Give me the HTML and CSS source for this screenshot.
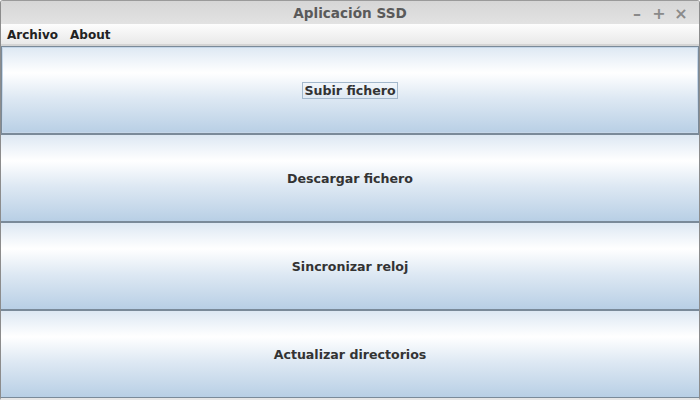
FILE: index.html
```html
<!DOCTYPE html>
<html>
<head>
<meta charset="utf-8">
<link rel="stylesheet" href="styles.css">
</head>
<body>
<div class="window">
  <div class="titlebar">
    <span class="title">Aplicación SSD</span>
    <div class="controls">
      <span class="ctl">–</span>
      <span class="ctl">+</span>
      <span class="ctl">×</span>
    </div>
  </div>
  <div class="menubar">
    <span class="menu">Archivo</span>
    <span class="menu">About</span>
  </div>
  <div class="content">
    <button class="btn focused"><span class="label">Subir fichero</span></button>
    <button class="btn"><span class="label">Descargar fichero</span></button>
    <button class="btn"><span class="label">Sincronizar reloj</span></button>
    <button class="btn"><span class="label">Actualizar directorios</span></button>
  </div>
</div>
</body>
</html>
```

FILE: styles.css
```css
html, body {
  margin: 0;
  padding: 0;
  background: #ffffff;
}
.window {
  width: 700px;
  height: 400px;
  box-sizing: border-box;
  display: flex;
  flex-direction: column;
  border-left: 1px solid #8c8c8c;
  border-right: 1px solid #8c8c8c;
  border-top: 1px solid #9a9a9a;
  border-bottom: 2px solid #e6e6e6;
  border-radius: 3px 3px 0 0;
  font-family: "DejaVu Sans", sans-serif;
  overflow: hidden;
}
.titlebar {
  height: 23px;
  flex: none;
  position: relative;
  display: flex;
  align-items: center;
  justify-content: center;
  background: linear-gradient(#d6d6d6, #e2e2e2);
}
.title {
  font-size: 13.6px;
  font-weight: bold;
  color: #5a5a5a;
}
.controls {
  position: absolute;
  right: 11px;
  top: 3px;
  display: flex;
  gap: 8px;
}
.ctl {
  width: 14px;
  text-align: center;
  font-size: 16px;
  font-weight: bold;
  color: #8a8a8a;
}
.menubar {
  flex: none;
  display: flex;
  align-items: center;
  padding-left: 6px;
  padding-top: 1px;
  box-sizing: border-box;
  gap: 12px;
  background: linear-gradient(#fdfdfd, #e9e9e9);
  border-bottom: 2px solid #d4d4d4;
  height: 22px;
}
.menu {
  font-size: 12px;
  font-weight: bold;
  color: #222;
}
.content {
  flex: 1;
  display: flex;
  flex-direction: column;
}
.btn {
  flex: 1;
  margin: 0;
  padding: 0;
  display: flex;
  align-items: center;
  justify-content: center;
  border: none;
  border-top: 1px solid #7a8a99;
  border-bottom: 1px solid #7a8a99;
  background: linear-gradient(#dde8f3 0%, #ffffff 30%, #dde8f3 60%, #b8cfe5 100%);
  font-family: "DejaVu Sans", sans-serif;
  font-size: 12.6px;
  font-weight: bold;
  color: #333333;
}
.btn.focused {
  border: 1px solid #7a8a99;
  box-shadow: inset 0 0 0 1px #c5d6e8;
}
.btn .label {
  padding: 0 1px;
  border: 1px solid transparent;
}
.btn.focused .label {
  border-color: #a3b8cc;
}
```
